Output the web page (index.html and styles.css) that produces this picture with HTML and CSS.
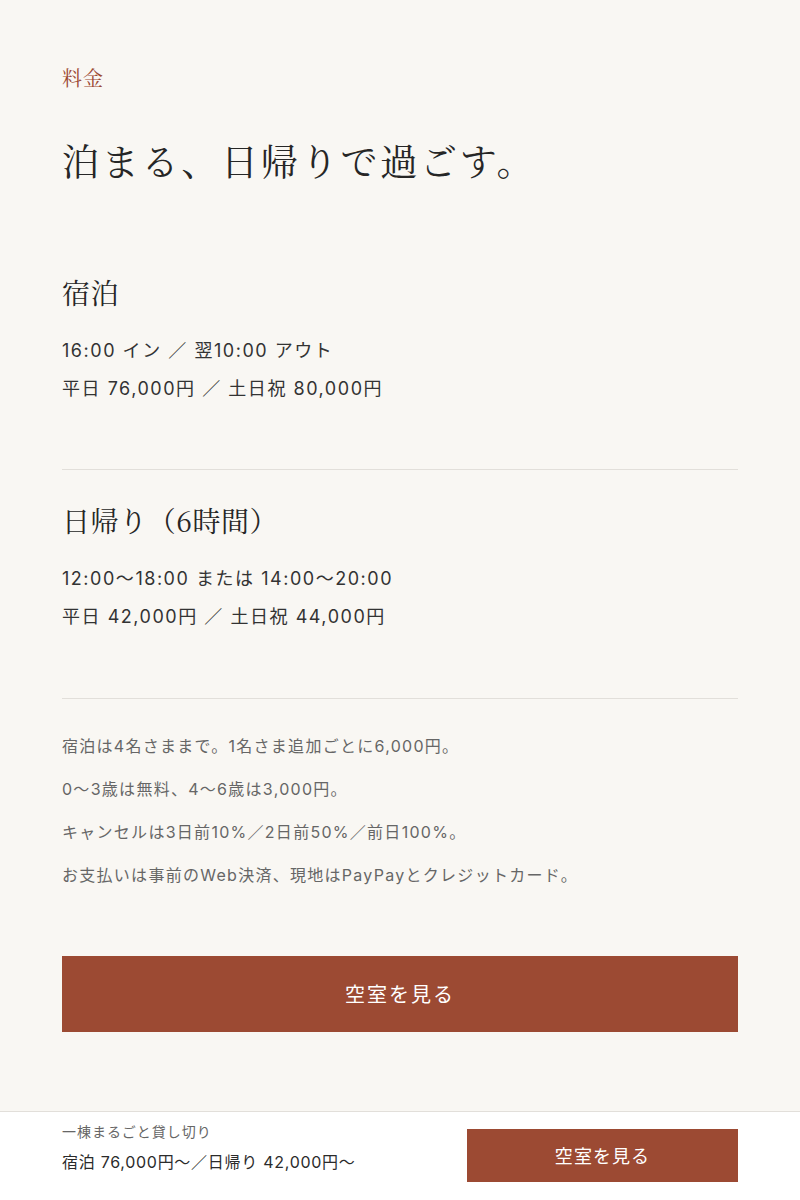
FILE: index.html
```html
<!DOCTYPE html>
<html lang="ja">

<head>
    <meta charset="UTF-8">
    <title>料金</title>
    <link rel="stylesheet" href="styles.css">
</head>

<body>
    <main class="price">
        <p class="price-label">料金</p>
        <h2 class="price-title">泊まる、日帰りで過ごす。</h2>

        <!-- 宿泊 -->
        <section class="plan plan-first">
            <h3 class="plan-name">宿泊</h3>
            <p class="plan-line">16:00 イン ／ 翌10:00 アウト</p>
            <p class="plan-line">平日 76,000円 ／ 土日祝 80,000円</p>
        </section>

        <!-- 日帰り -->
        <section class="plan">
            <h3 class="plan-name">日帰り（6時間）</h3>
            <p class="plan-line">12:00〜18:00 または 14:00〜20:00</p>
            <p class="plan-line">平日 42,000円 ／ 土日祝 44,000円</p>
        </section>

        <div class="notes">
            <p>宿泊は4名さままで。1名さま追加ごとに6,000円。</p>
            <p>0〜3歳は無料、4〜6歳は3,000円。</p>
            <p>キャンセルは3日前10%／2日前50%／前日100%。</p>
            <p>お支払いは事前のWeb決済、現地はPayPayとクレジットカード。</p>
        </div>

        <a class="btn-main" href="javascript:;">空室を見る</a>
    </main>

    <!-- 下部固定バー -->
    <div class="bottom-bar">
        <div class="bottom-info">
            <p class="bottom-sub">一棟まるごと貸し切り</p>
            <p class="bottom-price">宿泊 76,000円〜／日帰り 42,000円〜</p>
        </div>
        <a class="btn-bar" href="javascript:;">空室を見る</a>
    </div>
</body>

</html>
```

FILE: styles.css
```css
/* 基本設定 */
body {
    margin: 0;
    background: #f9f7f3;
    color: #2b2b2b;
    font-family: Inter, "Noto Sans CJK JP", sans-serif;
    letter-spacing: 0.06em;
}

p,
h2,
h3 {
    margin: 0;
    padding: 0;
}

a {
    text-decoration: none;
}

/* メイン */
.price {
    padding: 63px 62px 160px 62px;
}

.price-label {
    font-family: "Noto Serif CJK JP", "Liberation Serif", serif;
    font-size: 20px;
    line-height: 30px;
    letter-spacing: 0.05em;
    color: #9c4a33;
}

.price-title {
    margin-top: 40px;
    font-family: "Noto Serif CJK JP", "Liberation Serif", serif;
    font-weight: normal;
    font-size: 37px;
    line-height: 54px;
    letter-spacing: 0.075em;
    color: #262626;
}

/* プラン */
.plan {
    padding: 29px 0 62px 0;
    border-bottom: 1px solid #e2dfda;
}

.plan-first {
    padding-top: 84px;
    padding-bottom: 61px;
}

.plan-name {
    font-family: "Noto Serif CJK JP", "Liberation Serif", serif;
    font-weight: normal;
    font-size: 28px;
    line-height: 42px;
    letter-spacing: 0.02em;
    margin-bottom: 19px;
    color: #262626;
}

.plan-line {
    font-size: 18px;
    line-height: 38px;
    letter-spacing: 0.085em;
    color: #333;
}

/* 注意事項 */
.notes {
    padding-top: 33px;
}

.notes p {
    font-size: 16px;
    line-height: 28px;
    margin-bottom: 15px;
    letter-spacing: 0.08em;
    color: #666;
}

/* ボタン */
.btn-main {
    display: block;
    margin-top: 67px;
    height: 76px;
    line-height: 76px;
    text-align: center;
    font-family: "Noto Sans CJK JP", sans-serif;
    font-size: 20px;
    color: #fff;
    background: #9c4a33;
    letter-spacing: 0.1em;
}

/* 下部固定バー */
.bottom-bar {
    position: fixed;
    left: 0;
    bottom: 0;
    width: 100%;
    height: 89px;
    box-sizing: border-box;
    padding: 0 62px;
    background: #fff;
    border-top: 1px solid #e2dfda;
    display: flex;
    align-items: flex-start;
    justify-content: space-between;
}

.bottom-info {
    padding-top: 10px;
}

.bottom-sub {
    font-size: 14px;
    line-height: 20px;
    color: #666;
}

.bottom-price {
    margin-top: 9px;
    font-size: 16px;
    line-height: 22px;
    letter-spacing: 0.045em;
    color: #2b2b2b;
}

.btn-bar {
    margin-top: 17px;
    width: 271px;
    height: 53px;
    line-height: 53px;
    text-align: center;
    font-family: "Noto Sans CJK JP", sans-serif;
    font-size: 18px;
    letter-spacing: 0.06em;
    color: #fff;
    background: #9c4a33;
}
```
